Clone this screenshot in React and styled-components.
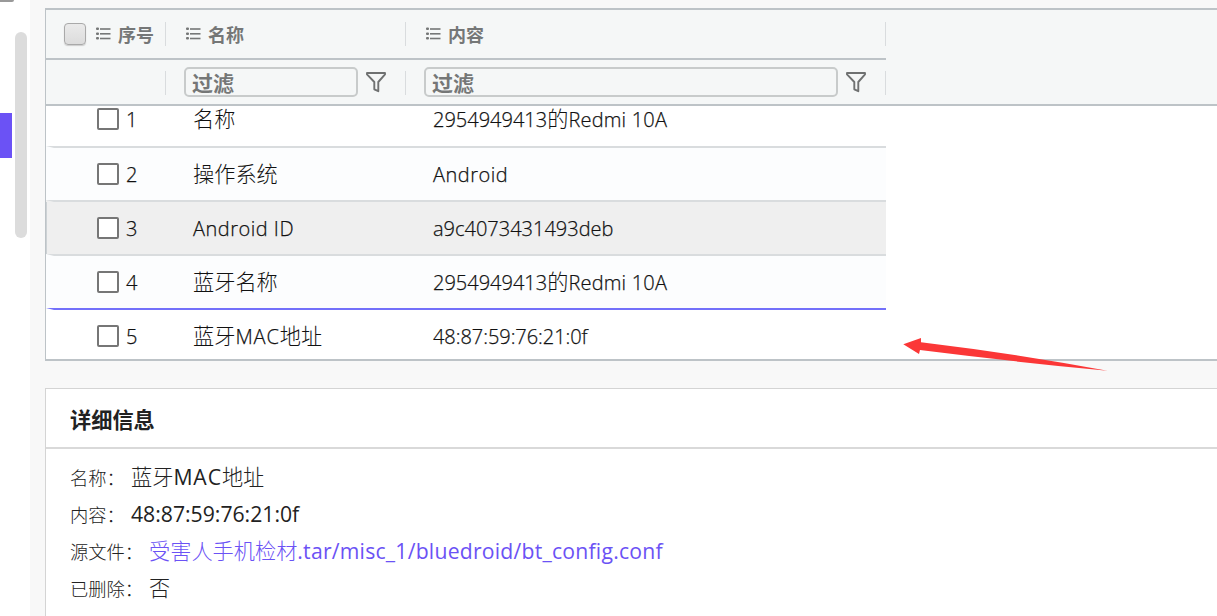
import React from "react";
import styled, { createGlobalStyle } from "styled-components";

const GlobalStyle = createGlobalStyle`
  *, *::before, *::after { box-sizing: border-box; }
  body {
    margin: 0;
    overflow: hidden;
    background: #f8f8f8;
    font-family: "Noto Sans CJK SC", sans-serif;
  }
`;

const Page = styled.div`
  position: relative;
  display: flex;
  width: 1217px;
  height: 616px;
  overflow: hidden;
  background: #f8f8f8;
`;

const Sidebar = styled.aside`
  display: flex;
  flex: none;
  width: 30px;
  background: #fff;
`;

const NavStrip = styled.div`
  width: 15px;
`;

const NavStub = styled.div`
  width: 14px;
  height: 2px;
  margin-bottom: 111px;
  background: #999;
  border-radius: 0 0 4px 0;
`;

const ActiveMark = styled.div`
  width: 12px;
  height: 45px;
  background: #6b52f5;
`;

const ScrollThumb = styled.div`
  width: 12px;
  height: 206px;
  margin-top: 32px;
  background: #dcdcdc;
  border-radius: 6px;
`;

const Main = styled.main`
  display: flex;
  flex: 1;
  flex-direction: column;
  gap: 27px;
  padding: 8px 0 0 15px;
`;

const Grid = styled.section`
  flex: none;
  height: 353px;
  border: solid #bdc3c7;
  border-width: 2px 0 2px 1px;
  background: #fff;
`;

const GridHead = styled.div`
  height: 96px;
  background: #f5f7f7;
  border-bottom: 2px solid #bdc3c7;
`;

const HeadRow = styled.div`
  display: grid;
  grid-template-columns: 120px 240px 480px;
  width: 840px;
  height: ${(p) => (p.$filter ? 44 : 50)}px;
  border-bottom: ${(p) => (p.$filter ? "0" : "2px solid #bdc3c7")};
`;

const HeadCell = styled.div`
  display: flex;
  align-items: center;
  padding-left: 18px;
  background: linear-gradient(#d9dcde, #d9dcde) no-repeat right ${(p) => p.$sepTop ?? 12}px / 1px 24px;
`;

const HeadLabel = styled.span`
  margin-left: 6px;
  padding-bottom: 1px;
  font-size: 18px;
  font-weight: 700;
  line-height: 26px;
  color: #757777;
`;

const HeadCheck = styled.span`
  width: 22px;
  height: 22px;
  margin-right: 8px;
  border: 1px solid #a9a9a9;
  border-radius: 4px;
  background: linear-gradient(#eaeaea, #dcdcdc);
  box-shadow: 0 1px 1px #ccc;
`;

const FilterBox = styled.div`
  display: flex;
  align-items: center;
  width: ${(p) => p.$w}px;
  height: 30px;
  margin-right: 8px;
  padding-left: 6px;
  border: 2px solid #c8cbcb;
  border-radius: 5px;
  font-size: 21px;
  font-weight: 700;
  line-height: 26px;
  color: #757777;
`;

const GridBody = styled.div`
  width: 840px;
  height: 253px;
`;

const Row = styled.div`
  display: grid;
  grid-template-columns: 139px 240px 1fr;
  align-items: center;
  height: 54px;
  border-top: 2px solid ${(p) => (p.$active ? "#7370fa" : "#d9dcde")};
  border-left: 8px solid transparent;
  background-color: ${(p) => p.$bg};
  background-origin: border-box;
  ${(p) =>
    p.$hover &&
    "background-image: linear-gradient(#ccd1d4, #ccd1d4); background-size: 1px 100%; background-repeat: no-repeat;"}

  &:first-child {
    height: 40px;
    padding-bottom: 14px;
    border-top: 0;
  }

  &:last-child {
    height: 51px;
    padding-top: 3px;
  }
`;

const Cell = styled.div`
  display: flex;
  align-items: center;
  height: 24px;
  color: #111;
`;

const IndexCell = styled(Cell)`
  gap: 7px;
  padding-left: 43px;
`;

const CheckBox = styled.span`
  width: 22px;
  height: 22px;
  border: 2px solid #767676;
  border-radius: 2px;
  background: #fff;
`;

const Mixed = styled.span`
  display: inline-flex;
  align-items: center;
  white-space: pre;
`;

const Han = styled.span`
  font: 300 21.2px/24px "Noto Sans CJK SC", sans-serif;
  padding-bottom: 2px;
`;

const Latin = styled.span`
  font: ${(p) => p.$weight ?? 300} ${(p) => p.$size ?? 20}px/24px "Open Sans", sans-serif;
  letter-spacing: ${(p) => p.$spacing ?? 0}px;
  -webkit-text-stroke: ${(p) => (p.$weight ? 0 : 0.25)}px;
  padding-top: 1px;
`;

const Panel = styled.section`
  flex: 1;
  border: solid #d4d4d4;
  border-width: 1px 0 0 1px;
  background: #fff;
`;

const PanelTitle = styled.h2`
  height: 60px;
  margin: 0;
  padding-left: 24px;
  border-bottom: 2px solid #d9d9d9;
  font-size: 21.2px;
  font-weight: 700;
  line-height: 60px;
  color: #222;
`;

const Fields = styled.div`
  padding: 9px 0 0 24px;
`;

const Field = styled.div`
  display: flex;
  align-items: center;
  height: 37px;
  color: ${(p) => (p.$link ? "#6b52f5" : "#222")};
`;

const FieldLabel = styled.span`
  width: ${(p) => p.$w}px;
  font-size: 18.3px;
  font-weight: 300;
  line-height: 28px;
  color: #222;
`;

const Arrow = styled.svg`
  position: absolute;
  left: 900px;
  top: 334px;
`;

function MixedText({ text, weight, size, spacing }) {
  const runs = text.match(/[\u4e00-\u9fff]+|[^\u4e00-\u9fff]+/g) || [];
  return (
    <Mixed>
      {runs.map((run, i) =>
        /[\u4e00-\u9fff]/.test(run) ? (
          <Han key={i}>{run}</Han>
        ) : (
          <Latin key={i} $weight={weight} $size={size} $spacing={/^\d+$/.test(run) ? 0 : spacing}>
            {run}
          </Latin>
        )
      )}
    </Mixed>
  );
}

const ListIcon = () => (
  <svg width="18" height="14" viewBox="-1 0 18 14" fill="#757777">
    <rect x="1" y="0.5" width="3" height="2.6" rx="1" />
    <rect x="1" y="5.5" width="3" height="2.6" rx="1" />
    <rect x="1" y="10" width="3" height="2.6" rx="1" />
    <rect x="5" y="1.2" width="10.5" height="1.6" />
    <rect x="5" y="6" width="10.5" height="1.6" />
    <rect x="5" y="10.7" width="10.5" height="1.6" />
  </svg>
);

const FunnelIcon = () => (
  <svg width="20" height="22" viewBox="0 0 20 22" fill="none" stroke="#6f7171" strokeWidth="1.9" strokeLinejoin="round">
    <path d="M1 2H19V3.4L12.3 11V20.2L8.3 18.3V11L1 3.4Z" />
  </svg>
);

const rows = [
  { name: "名称", value: "2954949413的Redmi 10A", valueSpacing: 0.2, bg: "#fff" },
  { name: "操作系统", value: "Android", valueSpacing: 0.5, bg: "#fcfdfe" },
  { name: "Android ID", nameSpacing: 0.5, value: "a9c4073431493deb", bg: "#efefef", hover: true },
  { name: "蓝牙名称", value: "2954949413的Redmi 10A", valueSpacing: 0.2, bg: "#fcfdfe" },
  { name: "蓝牙MAC地址", nameSpacing: 0.9, value: "48:87:59:76:21:0f", valueSpacing: -0.05, bg: "#fff", active: true },
];

const fields = [
  { label: "名称：", w: 61, value: "蓝牙MAC地址", spacing: 0.9 },
  { label: "内容：", w: 61, value: "48:87:59:76:21:0f", spacing: 0 },
  { label: "源文件：", w: 79, value: "受害人手机检材.tar/misc_1/bluedroid/bt_config.conf", spacing: 0.22, link: true },
  { label: "已删除：", w: 79, value: "否" },
];

export default function App() {
  return (
    <Page>
      <GlobalStyle />
      <Sidebar>
        <NavStrip>
          <NavStub />
          <ActiveMark />
        </NavStrip>
        <ScrollThumb />
      </Sidebar>
      <Main>
        <Grid>
          <GridHead>
            <HeadRow>
              <HeadCell>
                <HeadCheck />
                <ListIcon />
                <HeadLabel>序号</HeadLabel>
              </HeadCell>
              <HeadCell>
                <ListIcon />
                <HeadLabel>名称</HeadLabel>
              </HeadCell>
              <HeadCell>
                <ListIcon />
                <HeadLabel>内容</HeadLabel>
              </HeadCell>
            </HeadRow>
            <HeadRow $filter>
              <HeadCell $sepTop={11} />
              <HeadCell $sepTop={11}>
                <FilterBox $w={174}>过滤</FilterBox>
                <FunnelIcon />
              </HeadCell>
              <HeadCell $sepTop={11}>
                <FilterBox $w={414}>过滤</FilterBox>
                <FunnelIcon />
              </HeadCell>
            </HeadRow>
          </GridHead>
          <GridBody>
            {rows.map((r, i) => (
              <Row key={i} $bg={r.bg} $hover={r.hover} $active={r.active}>
                <IndexCell>
                  <CheckBox />
                  <Latin>{i + 1}</Latin>
                </IndexCell>
                <Cell><MixedText text={r.name} spacing={r.nameSpacing} /></Cell>
                <Cell><MixedText text={r.value} spacing={r.valueSpacing} /></Cell>
              </Row>
            ))}
          </GridBody>
        </Grid>
        <Panel>
          <PanelTitle>详细信息</PanelTitle>
          <Fields>
            {fields.map((f) => (
              <Field key={f.label} $link={f.link}>
                <FieldLabel $w={f.w}>{f.label}</FieldLabel>
                <MixedText text={f.value} weight={400} size={21.2} spacing={f.spacing} />
              </Field>
            ))}
          </Fields>
        </Panel>
      </Main>
      <Arrow width="210" height="40" viewBox="0 0 210 40" fill="#fb3737">
        <path d="M3.3 10.2L21 4V8.2Q115 19.5 207.5 36.8Q115 28 20 16L19 20Z" />
      </Arrow>
    </Page>
  );
}
